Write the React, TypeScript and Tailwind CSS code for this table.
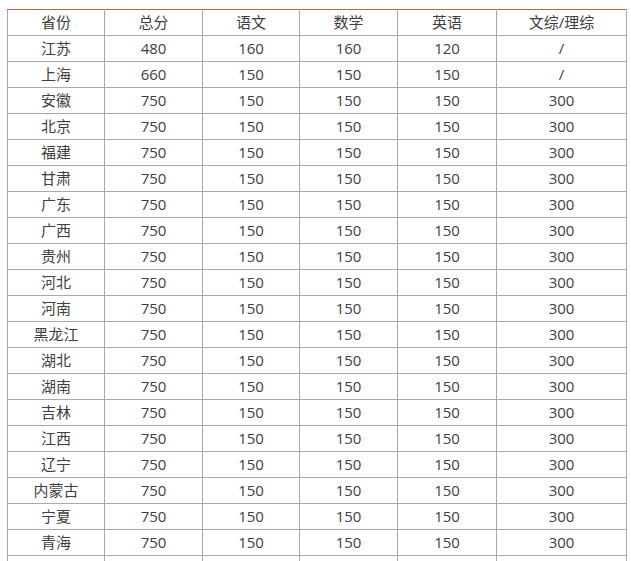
const header = ["省份", "总分", "语文", "数学", "英语", "文综/理综"];

const rows: string[][] = [
  ["江苏", "480", "160", "160", "120", "/"],
  ["上海", "660", "150", "150", "150", "/"],
  ...[
    "安徽", "北京", "福建", "甘肃", "广东", "广西", "贵州", "河北", "河南", "黑龙江",
    "湖北", "湖南", "吉林", "江西", "辽宁", "内蒙古", "宁夏", "青海",
  ].map((p) => [p, "750", "150", "150", "150", "300"]),
  // next row starts at the bottom edge, its text is out of view
  ["", "", "", "", "", ""],
];

const widths = ["w-[97px]", "w-[98px]", "w-[97px]", "w-[98px]", "w-[99px]", "w-[130px]"];

export default function App() {
  return (
    <div className="min-h-screen bg-white pt-[9px] pl-[7px]">
      <table
        className="w-[620px] table-fixed border-collapse border-t border-t-[#c0604c] text-[15px] text-[#404040]"
        style={{ fontFamily: '"Open Sans", "Noto Sans CJK SC", sans-serif' }}
      >
        <colgroup>
          {widths.map((w, i) => (
            <col key={i} className={w} />
          ))}
        </colgroup>
        <thead>
          <tr className="h-[26px]">
            {header.map((h) => (
              <th key={h} className="border border-[#a9a9a9] border-t-[#c0604c] p-0 text-center font-normal leading-none">
                {h}
              </th>
            ))}
          </tr>
        </thead>
        <tbody>
          {rows.map((r, ri) => (
            <tr key={ri} className="h-[26px]">
              {r.map((c, i) => (
                <td key={i} className="border border-[#a9a9a9] p-0 text-center leading-none">
                  {c}
                </td>
              ))}
            </tr>
          ))}
        </tbody>
      </table>
    </div>
  );
}
